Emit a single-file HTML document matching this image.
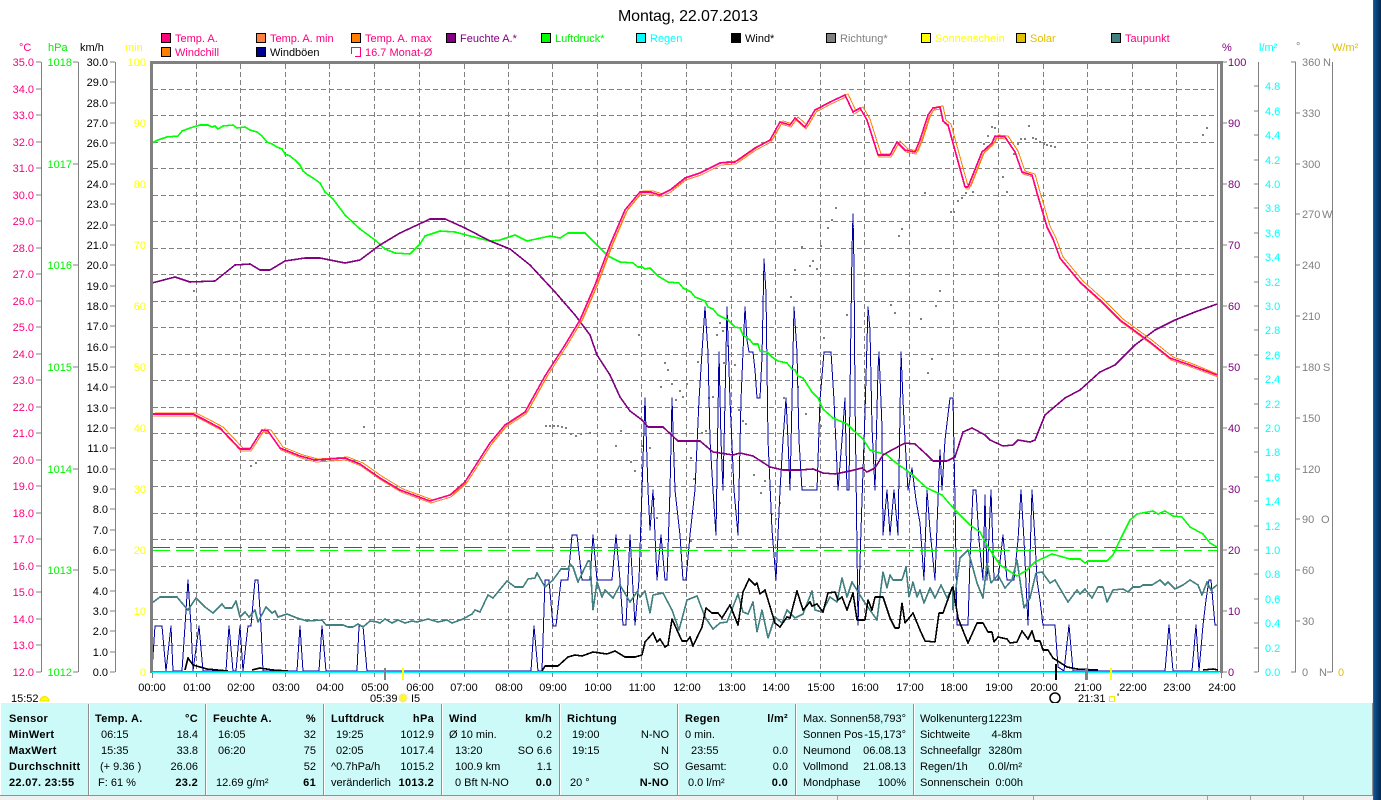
<!DOCTYPE html>
<html><head><meta charset="utf-8"><title>Montag, 22.07.2013</title>
<style>
html,body{margin:0;padding:0;background:#fff;width:1381px;height:800px;overflow:hidden}
svg{position:absolute;left:0;top:0;display:block}
text{font-family:"Liberation Sans",sans-serif;font-size:11px;fill:#000;white-space:pre}
.e text,text.e{text-anchor:end}
.b text,text.b{font-weight:bold;letter-spacing:.3px}
.l{fill:none;shape-rendering:crispEdges;stroke-linejoin:round}
.m text{text-anchor:middle}
</style></head><body>
<svg width="1381" height="800" viewBox="0 0 1381 800">
<defs><linearGradient id="dk" x1="0" y1="0" x2="1" y2="0"><stop offset="0" stop-color="#1c70bc"/><stop offset=".15" stop-color="#0d4f90"/><stop offset="1" stop-color="#02284f"/></linearGradient></defs>
<rect x="1373" y="0" width="8" height="800" fill="url(#dk)"/>

<text x="618" y="21" style="font-size:16px" textLength="140">Montag, 22.07.2013</text>

<!-- legend -->
<g stroke="#000" stroke-width="1" shape-rendering="crispEdges">
<rect x="161.5" y="33.5" width="9" height="9" fill="#ff0080"/>
<rect x="256.5" y="33.5" width="9" height="9" fill="#ff8040"/>
<rect x="351.5" y="33.5" width="9" height="9" fill="#ff8000"/>
<rect x="446.5" y="33.5" width="9" height="9" fill="#800080"/>
<rect x="541.5" y="33.5" width="9" height="9" fill="#00ff00"/>
<rect x="636.5" y="33.5" width="9" height="9" fill="#00ffff"/>
<rect x="731.5" y="33.5" width="9" height="9" fill="#000"/>
<rect x="826.5" y="33.5" width="9" height="9" fill="#808080"/>
<rect x="921.5" y="33.5" width="9" height="9" fill="#ffff00"/>
<rect x="1016.5" y="33.5" width="9" height="9" fill="#e0c000"/>
<rect x="1111.5" y="33.5" width="9" height="9" fill="#408080"/>
<rect x="161.5" y="47.5" width="9" height="9" fill="#ff8000"/>
<rect x="256.5" y="47.5" width="9" height="9" fill="#000090"/>
</g>
<path class="l" d="M351.5 54V47.5H360.5V56.5H355" stroke="#ff0080"/>
<text x="175" y="42" style="fill:#ff0080">Temp. A.</text>
<text x="270" y="42" style="fill:#ff0080">Temp. A. min</text>
<text x="365" y="42" style="fill:#ff0080">Temp. A. max</text>
<text x="460" y="42" style="fill:#800080">Feuchte A.*</text>
<text x="555" y="42" style="fill:#00f000">Luftdruck*</text>
<text x="650" y="42" style="fill:#00ffff">Regen</text>
<text x="745" y="42">Wind*</text>
<text x="840" y="42" style="fill:#808080">Richtung*</text>
<text x="935" y="42" style="fill:#ffff00">Sonnenschein</text>
<text x="1030" y="42" style="fill:#e0c000">Solar</text>
<text x="1125" y="42" style="fill:#ff0080">Taupunkt</text>
<text x="175" y="56" style="fill:#ff0080">Windchill</text>
<text x="270" y="56">Windböen</text>
<text x="365" y="56" style="fill:#ff0080">16.7 Monat-Ø</text>

<!-- unit labels -->
<text x="19" y="51" style="fill:#ff0080">°C</text>
<text x="48" y="51" style="fill:#00f000">hPa</text>
<text x="80" y="51">km/h</text>
<text x="125" y="51" style="fill:#ffff00">min</text>
<text x="1222" y="51" style="fill:#800080">%</text>
<text x="1259" y="51" style="fill:#00ffff">l/m²</text>
<text x="1296" y="50" style="fill:#808080">°</text>
<text x="1332" y="51" style="fill:#e0c000">W/m²</text>

<!-- axis lines + ticks -->
<path class="l" stroke="#808080" d="M41.5 62V672M78.5 62V672M115.5 62V672M1258.5 62V672M1295.5 62V672M1332.5 62V672
M36 62h5M36 89h5M36 115h5M36 142h5M36 168h5M36 195h5M36 221h5M36 248h5M36 274h5M36 301h5M36 327h5M36 354h5M36 380h5M36 407h5M36 433h5M36 460h5M36 486h5M36 513h5M36 539h5M36 566h5M36 592h5M36 619h5M36 645h5M36 672h5
M73 62h5M73 164h5M73 265h5M73 367h5M73 469h5M73 570h5M73 672h5
M110 62h5M110 82h5M110 103h5M110 123h5M110 143h5M110 164h5M110 184h5M110 204h5M110 225h5M110 245h5M110 265h5M110 286h5M110 306h5M110 326h5M110 347h5M110 367h5M110 387h5M110 408h5M110 428h5M110 448h5M110 469h5M110 489h5M110 509h5M110 530h5M110 550h5M110 570h5M110 591h5M110 611h5M110 631h5M110 652h5M110 672h5
M1222 62h5M1222 123h5M1222 184h5M1222 245h5M1222 306h5M1222 367h5M1222 428h5M1222 489h5M1222 550h5M1222 611h5M1222 672h5
M1254 86h4M1254 111h4M1254 135h4M1254 160h4M1254 184h4M1254 208h4M1254 233h4M1254 257h4M1254 282h4M1254 306h4M1254 330h4M1254 355h4M1254 379h4M1254 404h4M1254 428h4M1254 452h4M1254 477h4M1254 501h4M1254 526h4M1254 550h4M1254 574h4M1254 599h4M1254 623h4M1254 648h4M1254 672h4
M1291 62h5M1296 113h4M1296 164h4M1296 214h4M1296 265h4M1296 316h4M1296 367h4M1296 418h4M1296 469h4M1296 519h4M1296 570h4M1296 621h4M1291 672h5
M1327 672h5"/>

<g class="e">
<text x="34" y="66" style="fill:#ff0080">35.0</text><text x="34" y="93" style="fill:#ff0080">34.0</text><text x="34" y="119" style="fill:#ff0080">33.0</text><text x="34" y="146" style="fill:#ff0080">32.0</text><text x="34" y="172" style="fill:#ff0080">31.0</text><text x="34" y="199" style="fill:#ff0080">30.0</text><text x="34" y="225" style="fill:#ff0080">29.0</text><text x="34" y="252" style="fill:#ff0080">28.0</text><text x="34" y="278" style="fill:#ff0080">27.0</text><text x="34" y="305" style="fill:#ff0080">26.0</text><text x="34" y="331" style="fill:#ff0080">25.0</text><text x="34" y="358" style="fill:#ff0080">24.0</text><text x="34" y="384" style="fill:#ff0080">23.0</text><text x="34" y="411" style="fill:#ff0080">22.0</text><text x="34" y="437" style="fill:#ff0080">21.0</text><text x="34" y="464" style="fill:#ff0080">20.0</text><text x="34" y="490" style="fill:#ff0080">19.0</text><text x="34" y="517" style="fill:#ff0080">18.0</text><text x="34" y="543" style="fill:#ff0080">17.0</text><text x="34" y="570" style="fill:#ff0080">16.0</text><text x="34" y="596" style="fill:#ff0080">15.0</text><text x="34" y="623" style="fill:#ff0080">14.0</text><text x="34" y="649" style="fill:#ff0080">13.0</text><text x="34" y="676" style="fill:#ff0080">12.0</text>
<text x="72" y="66" style="fill:#00f000">1018</text><text x="72" y="168" style="fill:#00f000">1017</text><text x="72" y="269" style="fill:#00f000">1016</text><text x="72" y="371" style="fill:#00f000">1015</text><text x="72" y="473" style="fill:#00f000">1014</text><text x="72" y="574" style="fill:#00f000">1013</text><text x="72" y="676" style="fill:#00f000">1012</text>
<text x="108" y="66">30.0</text><text x="108" y="86">29.0</text><text x="108" y="107">28.0</text><text x="108" y="127">27.0</text><text x="108" y="147">26.0</text><text x="108" y="168">25.0</text><text x="108" y="188">24.0</text><text x="108" y="208">23.0</text><text x="108" y="229">22.0</text><text x="108" y="249">21.0</text><text x="108" y="269">20.0</text><text x="108" y="290">19.0</text><text x="108" y="310">18.0</text><text x="108" y="330">17.0</text><text x="108" y="351">16.0</text><text x="108" y="371">15.0</text><text x="108" y="391">14.0</text><text x="108" y="412">13.0</text><text x="108" y="432">12.0</text><text x="108" y="452">11.0</text><text x="108" y="473">10.0</text><text x="108" y="493">9.0</text><text x="108" y="513">8.0</text><text x="108" y="534">7.0</text><text x="108" y="554">6.0</text><text x="108" y="574">5.0</text><text x="108" y="595">4.0</text><text x="108" y="615">3.0</text><text x="108" y="635">2.0</text><text x="108" y="656">1.0</text><text x="108" y="676">0.0</text>
<text x="146" y="66" style="fill:#ffff00">100</text><text x="146" y="127" style="fill:#ffff00">90</text><text x="146" y="188" style="fill:#ffff00">80</text><text x="146" y="249" style="fill:#ffff00">70</text><text x="146" y="310" style="fill:#ffff00">60</text><text x="146" y="371" style="fill:#ffff00">50</text><text x="146" y="432" style="fill:#ffff00">40</text><text x="146" y="493" style="fill:#ffff00">30</text><text x="146" y="554" style="fill:#ffff00">20</text><text x="146" y="615" style="fill:#ffff00">10</text><text x="146" y="676" style="fill:#ffff00">0</text>
</g>
<g>
<text x="1228" y="66" style="fill:#800080">100</text><text x="1228" y="127" style="fill:#800080">90</text><text x="1228" y="188" style="fill:#800080">80</text><text x="1228" y="249" style="fill:#800080">70</text><text x="1228" y="310" style="fill:#800080">60</text><text x="1228" y="371" style="fill:#800080">50</text><text x="1228" y="432" style="fill:#800080">40</text><text x="1228" y="493" style="fill:#800080">30</text><text x="1228" y="554" style="fill:#800080">20</text><text x="1228" y="615" style="fill:#800080">10</text><text x="1228" y="676" style="fill:#800080">0</text>
<text x="1265" y="90" style="fill:#00ffff">4.8</text><text x="1265" y="115" style="fill:#00ffff">4.6</text><text x="1265" y="139" style="fill:#00ffff">4.4</text><text x="1265" y="164" style="fill:#00ffff">4.2</text><text x="1265" y="188" style="fill:#00ffff">4.0</text><text x="1265" y="212" style="fill:#00ffff">3.8</text><text x="1265" y="237" style="fill:#00ffff">3.6</text><text x="1265" y="261" style="fill:#00ffff">3.4</text><text x="1265" y="286" style="fill:#00ffff">3.2</text><text x="1265" y="310" style="fill:#00ffff">3.0</text><text x="1265" y="334" style="fill:#00ffff">2.8</text><text x="1265" y="359" style="fill:#00ffff">2.6</text><text x="1265" y="383" style="fill:#00ffff">2.4</text><text x="1265" y="408" style="fill:#00ffff">2.2</text><text x="1265" y="432" style="fill:#00ffff">2.0</text><text x="1265" y="456" style="fill:#00ffff">1.8</text><text x="1265" y="481" style="fill:#00ffff">1.6</text><text x="1265" y="505" style="fill:#00ffff">1.4</text><text x="1265" y="530" style="fill:#00ffff">1.2</text><text x="1265" y="554" style="fill:#00ffff">1.0</text><text x="1265" y="578" style="fill:#00ffff">0.8</text><text x="1265" y="603" style="fill:#00ffff">0.6</text><text x="1265" y="627" style="fill:#00ffff">0.4</text><text x="1265" y="652" style="fill:#00ffff">0.2</text><text x="1265" y="676" style="fill:#00ffff">0.0</text>
<text x="1302" y="66" style="fill:#808080">360</text><text x="1323" y="66" style="fill:#808080">N</text><text x="1302" y="117" style="fill:#808080">330</text><text x="1302" y="168" style="fill:#808080">300</text><text x="1302" y="218" style="fill:#808080">270</text><text x="1322" y="218" style="fill:#808080">W</text><text x="1302" y="269" style="fill:#808080">240</text><text x="1302" y="320" style="fill:#808080">210</text><text x="1302" y="371" style="fill:#808080">180</text><text x="1323" y="371" style="fill:#808080">S</text><text x="1302" y="422" style="fill:#808080">150</text><text x="1302" y="473" style="fill:#808080">120</text><text x="1302" y="523" style="fill:#808080">90</text><text x="1321" y="523" style="fill:#808080">O</text><text x="1302" y="574" style="fill:#808080">60</text><text x="1302" y="625" style="fill:#808080">30</text><text x="1302" y="676" style="fill:#808080">0</text><text x="1319" y="676" style="fill:#808080">N</text>
<text x="1338" y="676" style="fill:#e0c000">0</text>
</g>

<!-- grid -->
<path class="l" stroke="#808080" stroke-dasharray="5 3" d="M196.5 64V678M240.5 64V678M285.5 64V678M329.5 64V678M374.5 64V678M419.5 64V678M464.5 64V678M508.5 64V678M552.5 64V678M597.5 64V678M641.5 64V678M686.5 64V678M731.5 64V678M775.5 64V678M820.5 64V678M864.5 64V678M909.5 64V678M953.5 64V678M998.5 64V678M1043.5 64V678M1087.5 64V678M1132.5 64V678M1176.5 64V678"/>
<path class="l" stroke="#808080" stroke-dasharray="5 3" d="M153 89.5H1217M153 115.5H1217M153 142.5H1217M153 168.5H1217M153 195.5H1217M153 221.5H1217M153 248.5H1217M153 274.5H1217M153 301.5H1217M153 327.5H1217M153 354.5H1217M153 380.5H1217M153 407.5H1217M153 433.5H1217M153 460.5H1217M153 486.5H1217M153 513.5H1217M153 539.5H1217M153 566.5H1217M153 592.5H1217M153 619.5H1217M153 645.5H1217"/>
<path class="l" stroke="#808080" d="M152.5 672V678M1217.5 62V672M1221.5 672V678"/>

<!-- dots -->
<path fill="#808080" shape-rendering="crispEdges" d="M835 207h2v2h-2zM831 219h2v2h-2zM827 227h2v2h-2zM852 225h2v2h-2zM801 246h2v2h-2zM820 245h2v2h-2zM812 260h2v2h-2zM809 265h2v2h-2zM816 268h2v2h-2zM794 269h2v2h-2zM790 296h2v2h-2zM846 314h2v2h-2zM898 235h2v2h-2zM901 228h2v2h-2zM939 290h2v2h-2zM890 304h2v2h-2zM894 312h2v2h-2zM935 305h2v2h-2zM920 318h2v2h-2zM931 358h2v2h-2zM927 372h2v2h-2zM638 334h2v2h-2zM719 322h2v2h-2zM716 334h2v2h-2zM722 330h2v2h-2zM727 345h2v2h-2zM823 337h2v2h-2zM697 361h2v2h-2zM723 362h2v2h-2zM734 364h2v2h-2zM664 362h2v2h-2zM667 369h2v2h-2zM660 386h2v2h-2zM671 383h2v2h-2zM679 390h2v2h-2zM675 399h2v2h-2zM682 396h2v2h-2zM686 383h2v2h-2zM797 386h2v2h-2zM708 397h2v2h-2zM712 396h2v2h-2zM783 397h2v2h-2zM738 409h2v2h-2zM805 413h2v2h-2zM742 420h2v2h-2zM745 423h2v2h-2zM820 425h2v2h-2zM705 430h2v2h-2zM701 432h2v2h-2zM644 408h2v2h-2zM630 461h2v2h-2zM634 470h2v2h-2zM649 447h2v2h-2zM641 445h2v2h-2zM653 498h2v2h-2zM656 517h2v2h-2zM690 457h2v2h-2zM693 478h2v2h-2zM690 540h2v2h-2zM753 474h2v2h-2zM764 480h2v2h-2zM760 492h2v2h-2zM771 513h2v2h-2zM775 518h2v2h-2zM779 502h2v2h-2zM924 192h2v2h-2zM950 211h2v2h-2zM953 211h2v2h-2zM957 200h2v2h-2zM961 197h2v2h-2zM965 192h2v2h-2zM972 191h2v2h-2zM1002 176h2v2h-2zM1006 191h2v2h-2zM983 143h2v2h-2zM987 135h2v2h-2zM991 126h2v2h-2zM994 127h2v2h-2zM1013 153h2v2h-2zM1017 143h2v2h-2zM1020 138h2v2h-2zM1024 138h2v2h-2zM1028 125h2v2h-2zM1032 137h2v2h-2zM1035 138h2v2h-2zM1039 141h2v2h-2zM1043 143h2v2h-2zM1046 144h2v2h-2zM1050 145h2v2h-2zM1054 146h2v2h-2zM1202 134h2v2h-2zM1206 127h2v2h-2zM545 425h2v2h-2zM549 425h2v2h-2zM553 425h2v2h-2zM557 425h2v2h-2zM561 426h2v2h-2zM565 427h2v2h-2zM570 433h2v2h-2zM575 435h2v2h-2zM580 433h2v2h-2zM589 432h2v2h-2zM193 290h2v2h-2zM250 465h2v2h-2zM255 462h2v2h-2zM363 426h2v2h-2zM615 445h2v2h-2zM620 430h2v2h-2z"/>

<!-- Windböen -->
<polyline class="l" stroke="#0000a0" stroke-width="1" points="152,671 155,626 162,626 166,671 171,626 173,671 182,671 185,626 188,580 191,626 193,671 199,626 203,671 226,671 229,626 233,671 236,671 240,626 243,671 248,626 251,626 255,580 258,580 261,626 263,671 297,671 300,626 303,671 319,671 322,626 326,671 357,671 359,626 363,626 367,671 531,671 534,626 538,671 542,671 545,580 549,580 553,626 556,626 561,580 568,580 572,535 577,535 582,580 587,580 590,580 593,535 597,580 612,580 616,535 620,580 623,625 626,625 630,535 635,625 639,580 642,490 645,398 648,490 650,530 653,490 657,580 661,535 665,580 667,580 670,490 672,398 675,490 680,535 683,580 686,580 690,535 695,490 699,400 702,352 705,307 708,352 710,440 713,490 716,535 719,352 721,440 723,490 725,400 727,307 730,400 734,490 738,535 741,400 743,352 745,307 747,340 749,352 753,352 755,370 757,398 760,398 762,357 764,259 766,293 768,440 772,530 776,580 780,490 783,440 786,398 788,440 790,490 792,400 794,307 797,352 799,440 802,490 817,490 820,400 824,352 831,352 834,400 838,490 842,440 845,398 847,490 849,490 850,393 852,250 853,214 854,267 855,397 858,625 861,530 865,413 868,307 870,330 872,427 875,490 878,370 879,352 882,427 883,535 887,490 890,535 894,490 898,535 901,352 903,400 905,440 908,490 912,468 916,500 920,523 924,580 927,490 930,530 935,580 938,500 940,450 942,490 945,440 950,398 953,398 955,500 957,625 960,625 968,625 970,560 973,490 976,490 979,540 983,580 985,495 987,580 991,490 994,580 998,580 1003,535 1007,580 1014,580 1018,540 1021,490 1024,540 1028,625 1032,490 1035,540 1037,580 1040,600 1043,625 1055,625 1058,667 1064,671 1069,625 1073,671 1165,671 1169,625 1173,671 1192,671 1196,625 1199,671 1203,625 1206,600 1209,580 1211,580 1215,625 1217,625"/>

<!-- Taupunkt -->
<polyline class="l" stroke="#408080" stroke-width="1.6" points="152,603 160,597 177,597 182,603 188,610 196,598 205,607 213,613 222,604 225,608 232,608 236,601 240,617 245,612 249,617 255,610 258,622 266,607 272,613 275,611 278,617 287,614 297,618 307,621 322,620 326,625 343,625 348,627 353,627 358,624 363,627 370,621 377,622 380,623 385,619 392,623 398,620 405,623 412,621 417,622 428,619 438,622 447,620 452,623 463,619 472,614 475,610 480,612 488,595 493,598 507,581 515,587 523,587 528,579 535,578 537,573 545,587 553,580 561,569 568,569 570,564 573,567 578,582 588,561 590,561 593,610 597,582 602,597 605,590 613,598 620,585 630,602 637,592 640,597 645,591 650,613 653,595 663,593 672,610 679,630 687,600 697,596 705,617 713,629 720,623 727,622 738,594 743,612 748,614 753,602 757,632 762,610 768,638 775,617 782,623 787,610 795,618 803,614 812,591 815,610 822,612 830,597 837,602 842,578 847,597 852,582 863,600 877,620 883,572 887,588 890,575 893,580 902,580 906,567 909,597 913,582 917,597 920,590 924,603 930,588 935,598 941,585 947,598 953,587 953,610 960,558 968,550 977,583 983,598 987,563 991,583 998,575 1005,588 1012,580 1017,560 1024,608 1030,598 1036,573 1042,572 1050,583 1055,580 1068,602 1077,590 1080,594 1085,589 1092,598 1098,587 1103,587 1107,602 1113,590 1123,589 1128,592 1133,587 1140,587 1143,585 1152,585 1160,580 1165,585 1168,582 1175,589 1183,585 1190,580 1198,585 1202,595 1207,582 1211,590 1217,585"/>

<!-- Wind -->
<polyline class="l" stroke="#000" stroke-width="1.6" points="185,670 188,658 193,665 207,669 228,671"/>
<polyline class="l" stroke="#000" stroke-width="1.6" points="252,670 260,668 273,670 288,671"/>
<polyline class="l" stroke="#000" stroke-width="1.6" points="542,671 545,666 558,666 568,657 575,655 582,656 593,652 607,654 615,651 620,654 625,657 635,657 642,655 645,642 653,633 657,642 660,639 665,647 668,645 672,619 682,641 687,641 690,637 693,646 702,627 706,608 712,613 718,613 722,618 730,605 738,625 743,592 749,579 755,585 757,583 760,594 765,590 775,623 780,627 787,617 790,618 797,591 803,610 810,602 812,606 817,604 823,612 828,593 835,592 838,600 842,597 847,610 853,593 857,620 865,620 868,600 872,610 875,597 883,597 890,618 895,628 899,628 902,603 905,623 913,613 920,630 925,641 935,642 939,613 943,613 952,588 953,587 958,618 968,643 977,623 983,623 988,632 992,632 994,642 998,637 1007,639 1010,643 1017,642 1022,631 1028,639 1032,631 1035,641 1040,641 1043,650 1048,650 1053,658 1067,667 1077,669 1098,670"/>
<polyline class="l" stroke="#000" stroke-width="1.6" points="1203,670 1213,669 1218,670"/>

<!-- Monat dashed -->
<path class="l" stroke="#f00070" stroke-dasharray="18 6" d="M152 547.5H620"/>
<path class="l" stroke="#b03070" stroke-dasharray="18 6" d="M624 547.5H1217"/>
<path class="l" stroke="#00ff00" stroke-dasharray="18 6" d="M152 550.5H1217"/>

<!-- Luftdruck -->
<polyline class="l" stroke="#00ff00" stroke-width="1.6" points="152,143 158,140 167,137 178,136 182,131 190,128 200,125 208,125 212,127 215,126 218,129 223,126 233,125 237,128 245,127 250,130 257,132 262,136 267,142 272,144 277,147 282,149 285,154 290,156 295,160 300,165 303,171 308,175 313,178 320,183 325,192 333,199 345,215 360,229 375,240 385,249 395,253 410,254 420,244 425,236 440,231 455,232 470,236 490,241 500,240 515,235 527,241 550,236 560,238 568,233 585,233 600,248 608,256 620,262 633,263 638,267 642,267 645,269 650,268 658,276 668,282 679,283 683,288 691,292 695,297 705,301 708,307 713,309 718,315 728,320 735,327 740,328 743,335 750,340 753,344 758,344 760,351 767,352 772,357 778,361 787,363 792,369 795,370 798,376 803,378 812,392 818,398 823,409 833,418 847,424 853,430 863,439 870,450 887,455 895,462 913,475 918,480 927,488 942,495 955,510 970,525 980,532 988,547 1000,565 1017,576 1027,570 1035,562 1052,554 1070,559 1080,559 1085,563 1088,561 1107,561 1113,555 1120,540 1130,520 1137,514 1153,511 1158,514 1165,511 1173,516 1182,517 1190,527 1203,534 1210,543 1217,547"/>

<!-- Feuchte -->
<polyline class="l" stroke="#800080" stroke-width="1.6" points="152,283 175,277 190,282 215,281 235,265 250,264 260,270 270,270 285,261 305,258 320,258 345,263 360,260 380,245 400,233 430,219 445,219 465,228 490,241 510,249 530,265 555,292 575,315 590,335 597,355 610,375 620,397 630,411 642,420 648,427 663,427 678,441 700,441 713,452 733,455 740,453 753,456 770,467 783,470 800,470 813,469 823,473 835,474 850,471 862,468 867,472 875,468 883,455 890,451 905,443 915,444 927,455 933,461 947,461 955,457 963,432 972,428 985,435 990,440 1003,446 1013,445 1018,440 1030,442 1035,440 1045,415 1065,398 1080,390 1100,372 1115,365 1135,345 1155,330 1175,320 1195,312 1217,304"/>

<!-- Temperature family -->
<g class="l" stroke-width="1">
<polyline stroke="#ff8040" transform="translate(1,2)" points="152,414 193,414 205,420 220,428 240,449 250,449 262,430 268,431 280,448 300,456 315,460 345,458 360,464 380,478 400,490 430,501 450,495 465,482 490,443 505,425 525,412 545,376 565,345 580,320 595,285 610,245 625,210 640,192 650,192 660,195 670,190 685,178 700,173 720,163 735,162 755,148 770,140 780,122 790,125 795,118 805,127 815,110 830,102 845,95 853,112 860,108 867,120 878,155 890,155 897,142 905,150 915,152 920,140 928,115 933,108 940,107 943,121 948,125 965,187 968,187 982,152 992,143 995,136 1005,137 1015,152 1022,172 1032,175 1037,193 1047,227 1053,239 1060,258 1080,282 1100,300 1120,320 1150,342 1170,358 1190,365 1217,375"/>
<polyline stroke="#ff8000" transform="translate(3,-1)" points="152,414 193,414 205,420 220,428 240,449 250,449 262,430 268,431 280,448 300,456 315,460 345,458 360,464 380,478 400,490 430,501 450,495 465,482 490,443 505,425 525,412 545,376 565,345 580,320 595,285 610,245 625,210 640,192 650,192 660,195 670,190 685,178 700,173 720,163 735,162 755,148 770,140 780,122 790,125 795,118 805,127 815,110 830,102 845,95 853,112 860,108 867,120 878,155 890,155 897,142 905,150 915,152 920,140 928,115 933,108 940,107 943,121 948,125 965,187 968,187 982,152 992,143 995,136 1005,137 1015,152 1022,172 1032,175 1037,193 1047,227 1053,239 1060,258 1080,282 1100,300 1120,320 1150,342 1170,358 1190,365 1214,375"/>
</g>
<polyline class="l" stroke="#ff0080" stroke-width="1.6" points="152,414 193,414 205,420 220,428 240,449 250,449 262,430 268,431 280,448 300,456 315,460 345,458 360,464 380,478 400,490 430,501 450,495 465,482 490,443 505,425 525,412 545,376 565,345 580,320 595,285 610,245 625,210 640,192 650,192 660,195 670,190 685,178 700,173 720,163 735,162 755,148 770,140 780,122 790,125 795,118 805,127 815,110 830,102 845,95 853,112 860,108 867,120 878,155 890,155 897,142 905,150 915,152 920,140 928,115 933,108 940,107 943,121 948,125 965,187 968,187 982,152 992,143 995,136 1005,137 1015,152 1022,172 1032,175 1037,193 1047,227 1053,239 1060,258 1080,282 1100,300 1120,320 1150,342 1170,358 1190,365 1217,375"/>

<!-- frame -->
<rect x="150" y="61" width="3" height="612" fill="#808080"/>
<rect x="150" y="61" width="1073" height="3" fill="#808080"/>
<rect x="1220" y="61" width="3" height="612" fill="#808080"/>
<rect x="150" y="671" width="1073" height="1" fill="#808080"/>
<rect x="152" y="672" width="1067" height="1" fill="#00ffff"/>

<!-- sun marks -->
<rect x="384" y="668" width="2" height="12" fill="#808080"/>
<rect x="402" y="668" width="2" height="12" fill="#ffff00"/>
<rect x="1055" y="664" width="2" height="16" fill="#000"/>
<rect x="1085" y="668" width="3" height="12" fill="#808080"/>
<rect x="1110" y="668" width="2" height="12" fill="#ffff00"/>

<!-- x labels -->
<g class="m">
<text x="152" y="691">00:00</text><text x="197" y="691">01:00</text><text x="241" y="691">02:00</text><text x="286" y="691">03:00</text><text x="330" y="691">04:00</text><text x="375" y="691">05:00</text><text x="420" y="691">06:00</text><text x="464" y="691">07:00</text><text x="509" y="691">08:00</text><text x="553" y="691">09:00</text><text x="598" y="691">10:00</text><text x="642" y="691">11:00</text><text x="687" y="691">12:00</text><text x="732" y="691">13:00</text><text x="776" y="691">14:00</text><text x="821" y="691">15:00</text><text x="865" y="691">16:00</text><text x="910" y="691">17:00</text><text x="954" y="691">18:00</text><text x="999" y="691">19:00</text><text x="1044" y="691">20:00</text><text x="1088" y="691">21:00</text><text x="1133" y="691">22:00</text><text x="1177" y="691">23:00</text><text x="1222" y="691">24:00</text>
</g>
<text x="11" y="702">15:52</text>
<path d="M40 701a4.5 4.5 0 0 1 9 0z" fill="#ffff00" stroke="#f0e000" stroke-width="1"/>
<text x="370" y="702">05:39</text>
<circle cx="403" cy="698" r="3.5" fill="#ffff00" stroke="#f4e890" stroke-width="2"/>
<text x="411" y="702">I5</text>
<circle cx="1055" cy="698" r="5" fill="#fff" stroke="#000" stroke-width="1.5"/>
<text x="1078" y="702">21:31</text>
<rect x="1109.5" y="696.5" width="5" height="5" fill="none" stroke="#f0f000"/>
<text x="1117" y="701">'</text>

<!-- panel -->
<rect x="1" y="703" width="1372" height="92" fill="#cbfaf8"/>
<rect x="1372" y="703" width="1" height="92" fill="#909090"/>
<g fill="#909090" shape-rendering="crispEdges">
<rect x="88" y="704" width="1" height="91"/><rect x="205" y="704" width="1" height="91"/><rect x="323" y="704" width="1" height="91"/><rect x="441" y="704" width="1" height="91"/><rect x="559" y="704" width="1" height="91"/><rect x="677" y="704" width="1" height="91"/><rect x="795" y="704" width="1" height="91"/><rect x="913" y="704" width="1" height="91"/>
<rect x="0" y="795" width="1373" height="1"/>
</g>
<g fill="#fff" shape-rendering="crispEdges">
<rect x="89" y="704" width="1" height="91"/><rect x="206" y="704" width="1" height="91"/><rect x="324" y="704" width="1" height="91"/><rect x="442" y="704" width="1" height="91"/><rect x="560" y="704" width="1" height="91"/><rect x="678" y="704" width="1" height="91"/><rect x="796" y="704" width="1" height="91"/><rect x="914" y="704" width="1" height="91"/>
</g>
<rect x="0" y="796" width="1373" height="4" fill="#f0f0f0"/>
<path class="l" stroke="#a0a0a0" d="M837.5 796V800M1033.5 796V800M1207.5 796V800M1250.5 796V800M1303.5 796V800"/>

<g class="b">
<text x="9" y="722">Sensor</text><text x="9" y="738">MinWert</text><text x="9" y="754">MaxWert</text><text x="9" y="770">Durchschnitt</text><text x="9" y="786">22.07. 23:55</text>
<text x="95" y="722">Temp. A.</text><text x="198" y="722" class="e">°C</text><text x="198" y="786" class="e">23.2</text>
<text x="213" y="722">Feuchte A.</text><text x="316" y="722" class="e">%</text><text x="316" y="786" class="e">61</text>
<text x="331" y="722">Luftdruck</text><text x="434" y="722" class="e">hPa</text><text x="434" y="786" class="e">1013.2</text>
<text x="449" y="722">Wind</text><text x="552" y="722" class="e">km/h</text><text x="552" y="786" class="e">0.0</text>
<text x="567" y="722">Richtung</text><text x="669" y="786" class="e">N-NO</text>
<text x="685" y="722">Regen</text><text x="788" y="722" class="e">l/m²</text><text x="788" y="786" class="e">0.0</text>
</g>
<text x="101" y="738">06:15</text><text x="198" y="738" class="e">18.4</text>
<text x="101" y="754">15:35</text><text x="198" y="754" class="e">33.8</text>
<text x="100" y="770">(+ 9.36 )</text><text x="198" y="770" class="e">26.06</text>
<text x="98" y="786">F: 61 %</text>
<text x="218" y="738">16:05</text><text x="316" y="738" class="e">32</text>
<text x="218" y="754">06:20</text><text x="316" y="754" class="e">75</text>
<text x="316" y="770" class="e">52</text>
<text x="216" y="786">12.69 g/m²</text>
<text x="336" y="738">19:25</text><text x="434" y="738" class="e">1012.9</text>
<text x="336" y="754">02:05</text><text x="434" y="754" class="e">1017.4</text>
<text x="331" y="770">^0.7hPa/h</text><text x="434" y="770" class="e">1015.2</text>
<text x="331" y="786">veränderlich</text>
<text x="449" y="738">Ø 10 min.</text><text x="552" y="738" class="e">0.2</text>
<text x="455" y="754">13:20</text><text x="552" y="754" class="e">SO 6.6</text>
<text x="455" y="770">100.9 km</text><text x="552" y="770" class="e">1.1</text>
<text x="455" y="786">0 Bft N-NO</text>
<text x="572" y="738">19:00</text><text x="669" y="738" class="e">N-NO</text>
<text x="572" y="754">19:15</text><text x="669" y="754" class="e">N</text>
<text x="669" y="770" class="e">SO</text>
<text x="570" y="786">20 °</text>
<text x="685" y="738">0 min.</text>
<text x="691" y="754">23:55</text><text x="788" y="754" class="e">0.0</text>
<text x="685" y="770">Gesamt:</text><text x="788" y="770" class="e">0.0</text>
<text x="688" y="786">0.0 l/m²</text>
<text x="803" y="722">Max. Sonnen</text><text x="906" y="722" class="e">58,793°</text>
<text x="803" y="738">Sonnen Pos</text><text x="906" y="738" class="e">-15,173°</text>
<text x="803" y="754">Neumond</text><text x="906" y="754" class="e">06.08.13</text>
<text x="803" y="770">Vollmond</text><text x="906" y="770" class="e">21.08.13</text>
<text x="803" y="786">Mondphase</text><text x="906" y="786" class="e">100%</text>
<text x="920" y="722">Wolkenunterg</text><text x="1022" y="722" class="e">1223m</text>
<text x="920" y="738">Sichtweite</text><text x="1022" y="738" class="e">4-8km</text>
<text x="920" y="754">Schneefallgr</text><text x="1022" y="754" class="e">3280m</text>
<text x="920" y="770">Regen/1h</text><text x="1022" y="770" class="e">0.0l/m²</text>
<text x="920" y="786">Sonnenschein</text><text x="1023" y="786" class="e">0:00h</text>
</svg>
</body></html>
